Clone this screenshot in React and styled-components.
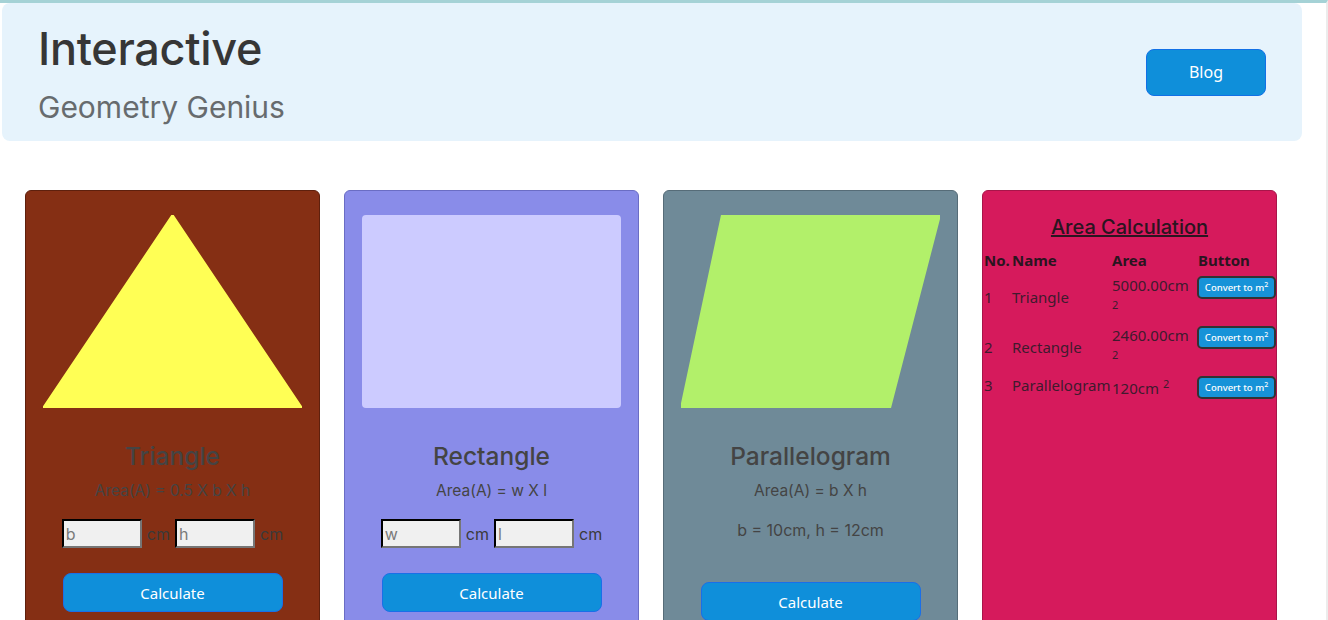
import React from 'react';
import styled, { createGlobalStyle } from 'styled-components';

const GlobalStyle = createGlobalStyle`
  html, body {
    margin: 0;
    padding: 0;
    overflow: hidden;
    background: #ffffff;
  }
  * {
    box-sizing: border-box;
  }
`;

const shapes = [
  {
    name: 'Triangle',
    formula: 'Area(A) = 0.5 X b X h',
    inputs: ['b', 'h'],
    bg: '#852f14',
    border: '#5e200d',
  },
  {
    name: 'Rectangle',
    formula: 'Area(A) = w X l',
    inputs: ['w', 'l'],
    bg: '#898ce9',
    border: '#6a6dc4',
  },
  {
    name: 'Parallelogram',
    formula: 'Area(A) = b X h',
    info: 'b = 10cm, h = 12cm',
    bg: '#6f8a98',
    border: '#566c78',
  },
];

const rows = [
  { no: 1, name: 'Triangle', area: '5000.00' },
  { no: 2, name: 'Rectangle', area: '2460.00' },
  { no: 3, name: 'Parallelogram', area: '120' },
];

const App = () => (
  <Page>
    <GlobalStyle />
    <Header>
      <div>
        <Title>Interactive</Title>
        <Subtitle>Geometry Genius</Subtitle>
      </div>
      <BlogButton>Blog</BlogButton>
    </Header>
    <Cards>
      {shapes.map(shape => (
        <Card key={shape.name} bg={shape.bg} border={shape.border}>
          <ShapeBox>
            <Shape name={shape.name} />
          </ShapeBox>
          <CardTitle>{shape.name}</CardTitle>
          <Formula>{shape.formula}</Formula>
          {shape.inputs ? (
            <InputRow>
              {shape.inputs.map(label => (
                <React.Fragment key={label}>
                  <SizeInput placeholder={label} />
                  <Unit>cm</Unit>
                </React.Fragment>
              ))}
            </InputRow>
          ) : (
            <Info>{shape.info}</Info>
          )}
          <CalcButton lower={!shape.inputs}>Calculate</CalcButton>
        </Card>
      ))}
      <Card bg="#d61a5c" border="#a8154a">
        <TableTitle>Area Calculation</TableTitle>
        <AreaTable>
          <colgroup>
            <col style={{ width: 28 }} />
            <col style={{ width: 100 }} />
            <col style={{ width: 86 }} />
            <col style={{ width: 79 }} />
          </colgroup>
          <thead>
            <HeadRow>
              <th>No.</th>
              <th>Name</th>
              <th>Area</th>
              <th>Button</th>
            </HeadRow>
          </thead>
          <tbody>
            {rows.map(row => (
              <BodyRow key={row.no} short={row.no === 3}>
                <td>{row.no}</td>
                <td>{row.name}</td>
                <td>
                  {row.area}cm <AreaSup>2</AreaSup>
                </td>
                <ButtonCell>
                  <ConvertButton>
                    Convert to m<ButtonSup>2</ButtonSup>
                  </ConvertButton>
                </ButtonCell>
              </BodyRow>
            ))}
          </tbody>
        </AreaTable>
      </Card>
    </Cards>
  </Page>
);

export default App;

const Shape = ({ name }) => {
  if (name === 'Rectangle') return <RectShape />;
  const points =
    name === 'Triangle'
      ? '129.5,0 259,193 0,193'
      : '41,0 259,0 209,193 0,193';
  const fill = name === 'Triangle' ? '#ffff55' : '#b2f06a';
  return (
    <svg width="259" height="193" viewBox="0 0 259 193">
      <polygon
        points={points}
        fill={fill}
        stroke={fill}
        strokeWidth="2"
        strokeLinejoin="round"
      />
    </svg>
  );
};

const Page = styled.div`
  min-height: 100vh;
  border-top: 3px solid #a5d2d6;
  border-right: 2px solid #ececec;
  padding: 0 24px 0 2px;
`;

const Header = styled.header`
  height: 138px;
  background: #e6f3fc;
  border-radius: 8px;
  display: flex;
  align-items: center;
  justify-content: space-between;
  padding: 0 36px;
`;

const Title = styled.h1`
  margin: 0;
  font-family: Inter, sans-serif;
  font-weight: 500;
  font-size: 45px;
  line-height: 56px;
  color: #363636;
  letter-spacing: -0.3px;
`;

const Subtitle = styled.div`
  margin-top: 13px;
  font-family: Inter, sans-serif;
  font-size: 30px;
  line-height: 34px;
  color: #676b6e;
`;

const BlogButton = styled.button`
  width: 120px;
  height: 47px;
  background: #0f8fda;
  border: 1px solid #1270e6;
  border-radius: 8px;
  color: #ffffff;
  font-family: 'Noto Sans', sans-serif;
  font-size: 16px;
`;

const Cards = styled.div`
  display: flex;
  gap: 24px;
  margin: 49px 0 0 23px;
`;

const Card = styled.div`
  width: 295px;
  height: 470px;
  flex-shrink: 0;
  background: ${props => props.bg};
  border: 1px solid ${props => props.border};
  border-radius: 6px;
  display: flex;
  flex-direction: column;
  align-items: center;
  padding-top: 24px;
`;

const ShapeBox = styled.div`
  width: 259px;
  height: 193px;
  display: flex;
  justify-content: center;
`;

const RectShape = styled.div`
  width: 262px;
  height: 193px;
  background: #cccbff;
  border-radius: 4px;
`;

const CardTitle = styled.h2`
  margin: 33px 0 0;
  font-family: Inter, sans-serif;
  font-weight: 500;
  font-size: 24.5px;
  line-height: 30px;
  color: #444444;
`;

const Formula = styled.div`
  margin-top: 10px;
  font-family: Inter, sans-serif;
  font-size: 15.5px;
  line-height: 19px;
  color: #444444;
`;

const Info = styled(Formula)`
  margin-top: 21px;
  font-size: 16px;
`;

const InputRow = styled.div`
  margin-top: 19px;
  display: flex;
  align-items: center;
  gap: 5px;
`;

const SizeInput = styled.input`
  width: 80px;
  height: 29px;
  padding: 0 2px;
  background: #f0f0f0;
  border: 2px inset #767676;
  border-top-color: #222;
  border-left-color: #222;
  font-family: Inter, sans-serif;
  font-size: 16px;
  color: #222;

  &::placeholder {
    color: #7a7a7a;
  }
`;

const Unit = styled.span`
  font-family: Inter, sans-serif;
  font-size: 16px;
  color: #3a3a3a;
`;

const CalcButton = styled.button`
  margin-top: ${props => (props.lower ? '42px' : '25px')};
  width: 220px;
  height: 39px;
  background: #0f8fda;
  border: 1px solid #1a6fe8;
  border-radius: 8px;
  color: #ffffff;
  font-family: 'Noto Sans', sans-serif;
  font-size: 15px;
`;

const TableTitle = styled.h3`
  margin: 0;
  font-family: Inter, sans-serif;
  font-weight: 500;
  font-size: 20px;
  line-height: 24px;
  color: #2a1520;
  text-decoration: underline;
`;

const AreaTable = styled.table`
  margin-top: 9px;
  width: 293px;
  table-layout: fixed;
  border-collapse: collapse;
  font-family: 'Noto Sans', sans-serif;
  font-size: 15px;
  line-height: 19px;
  color: #401a2e;

  th,
  td {
    padding: 0 1px;
    text-align: left;
    vertical-align: middle;
  }
`;

const AreaSup = styled.sup`
  font-size: 11px;
`;

const HeadRow = styled.tr`
  height: 24px;

  th {
    font-weight: 700;
    color: #2a1520;
  }
`;

const BodyRow = styled.tr`
  height: ${props => (props.short ? '27px' : '50px')};
`;

const ButtonCell = styled.td`
  && {
    vertical-align: top;
    padding: 4px 0 0;
  }
`;

const ConvertButton = styled.button`
  width: 79px;
  height: 23px;
  padding: 0;
  background: #1793d8;
  border: 2px solid #333333;
  border-radius: 5px;
  color: #ffffff;
  font-family: 'Noto Sans', sans-serif;
  font-weight: 500;
  font-size: 9.5px;
  line-height: 1;
  white-space: nowrap;
`;

const ButtonSup = styled.sup`
  font-size: 7px;
  line-height: 0;
`;
